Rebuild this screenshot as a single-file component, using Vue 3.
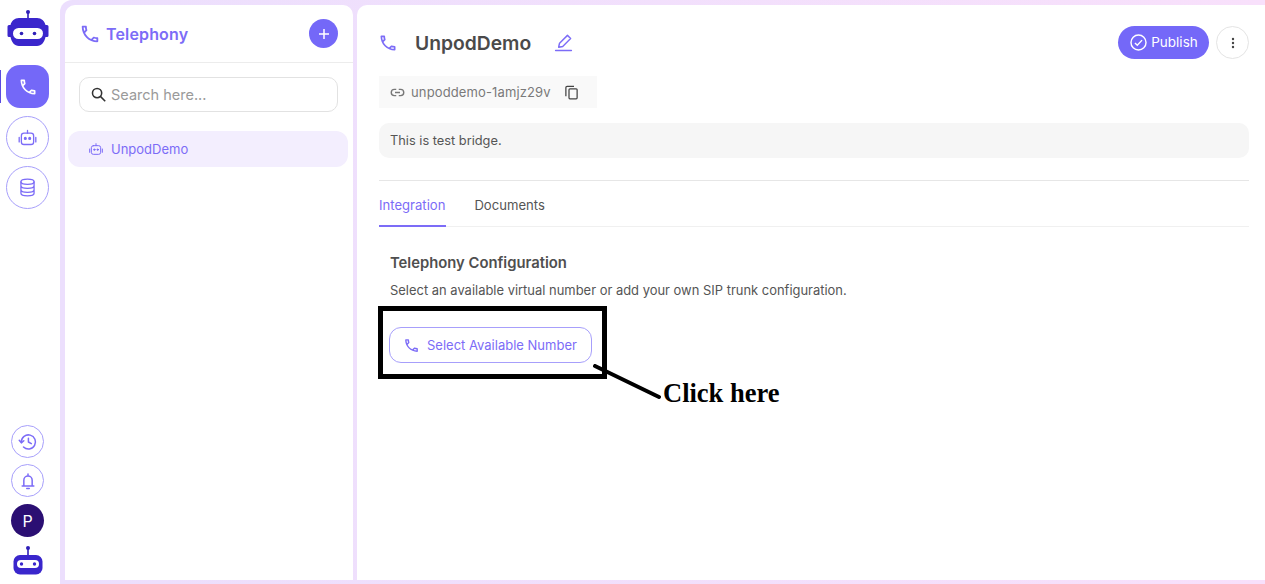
<script setup>
const railTop = [
  { key: 'robot', active: false },
  { key: 'db', active: false },
]
const phone = 'M6.54 5c.06.89.21 1.76.45 2.59l-1.2 1.2c-.41-1.2-.67-2.47-.76-3.79h1.51m9.86 12.02c.85.24 1.72.39 2.6.45v1.49c-1.32-.09-2.59-.35-3.8-.75l1.2-1.19M7.5 3H4c-.55 0-1 .45-1 1 0 9.39 7.61 17 17 17 .55 0 1-.45 1-1v-3.490c0-.55-.45-1-1-1-1.240 0-2.450-.2-3.570-.57-.1-.04-.21-.05-.31-.05-.26 0-.51.1-.71.29l-2.200 2.200c-2.830-1.450-5.150-3.760-6.590-6.590l2.200-2.200c.28-.28.36-.67.25-1.020C8.700 6.450 8.500 5.250 8.500 4c0-.55-.45-1-1-1z'
</script>

<template>
  <div class="page">
    <aside class="rail">
      <svg class="logo" width="42" height="36" viewBox="0 0 42 36">
        <circle cx="21" cy="2" r="2" fill="#2f1fb8" />
        <rect x="20.200" y="3" width="1.600" height="6" fill="#2f1fb8" />
        <path d="M12 8h18c4.500 0 7.500 3 8.500 7H40a1.500 1.500 0 0 1 1.500 1.500v9A1.500 1.500 0 0 1 40 27h-1.500c-1 5-4 9-8.500 9H12c-4.500 0-7.500-4-8.500-9H2A1.500 1.500 0 0 1 .5 25.500v-9A1.500 1.500 0 0 1 2 15h1.500C4.500 11 7.500 8 12 8z" fill="#3a26cc" />
        <rect x="6" y="18" width="30" height="11" rx="5.500" fill="#fff" />
        <circle cx="14.500" cy="23.500" r="1.800" fill="#2f1fb8" />
        <circle cx="27.500" cy="23.500" r="1.800" fill="#2f1fb8" />
      </svg>
      <div class="rail-nav">
        <div class="rail-active">
          <span class="rail-marker"></span>
          <svg width="20" height="20" viewBox="0 0 24 24" fill="#fff"><path :d="phone" /></svg>
        </div>
        <div class="rail-btn" v-for="item in railTop" :key="item.key">
          <svg v-if="item.key === 'robot'" width="21" height="21" viewBox="0 0 24 24" class="ic thin"><rect x="5" y="7" width="14" height="13" rx="3" /><path d="M12 7V4M2.500 12v5M21.500 12v5" /><circle cx="9.500" cy="13" r="1" fill="#7c6cf7" /><circle cx="14.500" cy="13" r="1" fill="#7c6cf7" /></svg>
          <svg v-else width="21" height="21" viewBox="0 0 24 24" class="ic thin"><ellipse cx="12" cy="5.500" rx="7.500" ry="3" /><path d="M4.500 5.500v13c0 1.700 3.400 3 7.500 3s7.500-1.300 7.500-3v-13M4.500 10c0 1.700 3.400 3 7.500 3s7.500-1.300 7.500-3M4.500 14.500c0 1.700 3.400 3 7.500 3s7.500-1.300 7.500-3" /></svg>
        </div>
      </div>
      <div class="rail-bottom">
        <div class="rail-small">
          <svg width="20" height="20" viewBox="0 0 24 24" class="ic"><path d="M4 12a8.500 8.500 0 1 1 2.600 6.100" /><path d="M1.500 10l2.500 3 3-2.500" /><path d="M12.500 7.500V12l3.500 2" /></svg>
        </div>
        <div class="rail-small">
          <svg width="20" height="20" viewBox="0 0 24 24" class="ic"><path d="M5 18h14M7 18v-7a5 5 0 0 1 10 0v7M12 3.500V6M10.500 21h3" /></svg>
        </div>
        <div class="avatar">P</div>
        <svg class="logo-small" width="30" height="30" viewBox="0 0 30 30">
          <circle cx="15" cy="2" r="2" fill="#2f1fb8" />
          <rect x="14.200" y="3" width="1.600" height="6" fill="#2f1fb8" />
          <rect x=".5" y="9" width="29" height="19.500" rx="6.500" fill="#3a26cc" />
          <rect x="4" y="14" width="22" height="8" rx="4" fill="#fff" />
          <circle cx="8.500" cy="18" r="1.700" fill="#3a26cc" />
          <circle cx="21.500" cy="18" r="1.700" fill="#3a26cc" />
        </svg>
      </div>
    </aside>

    <div class="frame">
      <section class="list-panel">
        <header class="list-head">
          <div class="list-title">
            <svg width="22" height="22" viewBox="0 0 24 24" class="ic-fill"><path :d="phone" /></svg>
            <span>Telephony</span>
          </div>
          <button class="add-btn">
            <svg width="14" height="14" viewBox="0 0 14 14"><path d="M7 2v10M2 7h10" stroke="#fff" stroke-width="1.500" fill="none" /></svg>
          </button>
        </header>
        <div class="search">
          <svg width="17" height="17" viewBox="0 0 24 24" fill="none" stroke="#333" stroke-width="2.200"><circle cx="10" cy="10" r="6.500" /><path d="M15 15l6.500 6.500" /></svg>
          <span>Search here...</span>
        </div>
        <div class="list-item">
          <svg width="16" height="16" viewBox="0 0 24 24" class="ic thin"><rect x="5" y="7" width="14" height="13" rx="3" /><path d="M12 7V4M2.500 12v5M21.500 12v5" /><circle cx="9.500" cy="13" r="1" fill="#7c6cf7" /><circle cx="14.500" cy="13" r="1" fill="#7c6cf7" /></svg>
          <span>UnpodDemo</span>
        </div>
      </section>

      <main class="detail">
        <div class="detail-head">
          <div class="detail-title">
            <svg width="20" height="20" viewBox="0 0 24 24" class="ic-fill"><path :d="phone" /></svg>
            <h1>UnpodDemo</h1>
            <svg width="19" height="19" viewBox="0 0 24 24" class="ic"><path d="M2 22h20M6 17l1-4L17 3l4 4-10 10-5 1z" /></svg>
          </div>
          <div class="detail-actions">
            <button class="publish">
              <svg width="19" height="19" viewBox="0 0 24 24" fill="none" stroke="#fff" stroke-width="1.800"><circle cx="12" cy="12" r="9.500" /><path d="M7.500 12.500l3 3 6-6.500" /></svg>
              <span>Publish</span>
            </button>
            <button class="more">
              <svg width="12" height="12" viewBox="0 0 12 12"><circle cx="6" cy="2" r="1.200" fill="#444" /><circle cx="6" cy="6" r="1.200" fill="#444" /><circle cx="6" cy="10" r="1.200" fill="#444" /></svg>
            </button>
          </div>
        </div>

        <div class="slug">
          <svg width="15" height="15" viewBox="0 0 24 24" fill="none" stroke="#777" stroke-width="2.200"><path d="M10 7H7a5 5 0 0 0 0 10h3M14 7h3a5 5 0 0 1 0 10h-3M8 12h8" /></svg>
          <span class="slug-text">unpoddemo-1amjz29v</span>
          <svg width="15" height="15" viewBox="0 0 24 24" fill="none" stroke="#444" stroke-width="2"><rect x="8" y="6" width="13" height="16" rx="1.500" /><path d="M16 2H5a2 2 0 0 0-2 2v14" /></svg>
        </div>

        <div class="desc">This is test bridge.</div>

        <nav class="tabs">
          <span class="tab tab-on">Integration</span>
          <span class="tab">Documents</span>
        </nav>

        <div class="config">
          <h2>Telephony Configuration</h2>
          <p>Select an available virtual number or add your own SIP trunk configuration.</p>
          <div class="highlight">
            <button class="select-btn">
              <svg width="17" height="17" viewBox="0 0 24 24" class="ic-fill"><path :d="phone" /></svg>
              <span>Select Available Number</span>
            </button>
            <svg class="arrow" width="72" height="36" viewBox="0 0 72 36"><path d="M2 2l64 31" stroke="#000" stroke-width="4" stroke-linecap="round" fill="none" /></svg>
            <span class="click-here">Click here</span>
          </div>
        </div>
      </main>
    </div>
  </div>
</template>

<style scoped>
.page {
  display: flex;
  width: 1265px;
  height: 584px;
  overflow: hidden;
  background: #fff;
  font-family: Inter, "Noto Sans", sans-serif;
  color: #4a4a4a;
}
.rail {
  width: 60px;
  flex: none;
  display: flex;
  flex-direction: column;
  align-items: center;
  padding: 10px 0 8px;
  box-sizing: border-box;
}
.logo { margin-right: 5px; flex: none; }
.rail-nav {
  display: flex;
  flex-direction: column;
  align-items: center;
  gap: 7.500px;
  margin-top: 19px;
  margin-right: 5px;
}
.rail-active {
  position: relative;
  width: 43px;
  height: 43px;
  border-radius: 14px;
  background: #7468f8;
  display: flex;
  align-items: center;
  justify-content: center;
}
.rail-marker {
  position: absolute;
  left: -6px;
  top: 5px;
  width: 1px;
  height: 33px;
  background: #5a4be0;
}
.rail-btn {
  width: 43px;
  height: 43px;
  box-sizing: border-box;
  border: 1px solid #a79ffb;
  border-radius: 50%;
  display: flex;
  align-items: center;
  justify-content: center;
}
.rail-bottom {
  margin-top: auto;
  margin-right: 5px;
  display: flex;
  flex-direction: column;
  align-items: center;
  gap: 6px;
}
.rail-small {
  width: 33px;
  height: 33px;
  box-sizing: border-box;
  border: 1px solid #a79ffb;
  border-radius: 50%;
  display: flex;
  align-items: center;
  justify-content: center;
}
.avatar {
  width: 33px;
  height: 33px;
  margin-top: 1px;
  border-radius: 50%;
  background: #2b0f73;
  color: #fff;
  font-size: 16px;
  display: flex;
  align-items: center;
  justify-content: center;
}
.logo-small { margin-top: 3px; }
.ic {
  fill: none;
  stroke: #7c6cf7;
  stroke-width: 1.800;
  stroke-linejoin: round;
  stroke-linecap: round;
  flex: none;
}
.ic.thin { stroke-width: 1.500; }
.ic-fill { fill: #7c6cf7; flex: none; }
.frame {
  flex: 1;
  display: flex;
  gap: 4px;
  padding: 5px 0 4px 5px;
  background: linear-gradient(90deg, #ecdffd, #f8e0fb);
  border-top-left-radius: 12px;
}
.list-panel {
  width: 288px;
  flex: none;
  background: #fff;
  border-radius: 10px 10px 0 0;
  display: flex;
  flex-direction: column;
}
.list-head {
  height: 58px;
  box-sizing: border-box;
  flex: none;
  display: flex;
  align-items: center;
  justify-content: space-between;
  padding: 0 15px 0 14px;
  border-bottom: 1px solid #ececec;
}
.list-title {
  display: flex;
  align-items: center;
  gap: 5px;
  font-size: 16px;
  font-weight: 600;
  letter-spacing: 0.150px;
  color: #7c6cf7;
}
.add-btn {
  width: 29px;
  height: 29px;
  border: 0;
  padding: 0;
  border-radius: 50%;
  background: #7468f8;
  display: flex;
  align-items: center;
  justify-content: center;
}
.search {
  margin: 14px 15px 0 14px;
  height: 35px;
  flex: none;
  box-sizing: border-box;
  border: 1px solid #e2e2e2;
  border-radius: 10px;
  display: flex;
  align-items: center;
  gap: 4px;
  padding: 0 10px;
  font-size: 14.500px;
  color: #9a9a9a;
}
.list-item {
  margin: 19px 5px 0 3px;
  height: 36px;
  flex: none;
  background: #f3eefe;
  border-radius: 12px;
  display: flex;
  align-items: center;
  gap: 7px;
  padding: 0 20px;
  font-size: 13px;
  color: #7c6cf7;
}
.detail {
  flex: 1;
  min-width: 0;
  background: #fff;
  border-radius: 10px 0 0 0;
  padding: 21px 16px 0 22px;
}
.detail-head {
  display: flex;
  align-items: flex-start;
  justify-content: space-between;
  height: 50px;
}
.detail-title {
  display: flex;
  align-items: center;
  gap: 17px;
  height: 33px;
  margin-left: -1px;
}
.detail-title h1 {
  margin: 0 6px 0 0;
  font-size: 19.300px;
  font-weight: 600;
  color: #4a4a4a;
}
.detail-actions {
  display: flex;
  align-items: center;
  gap: 7px;
}
.publish {
  width: 91px;
  height: 33px;
  border: 0;
  padding: 0 0 1px;
  border-radius: 17px;
  background: #7468f8;
  color: #fff;
  font: inherit;
  font-size: 13.500px;
  display: flex;
  align-items: center;
  justify-content: center;
  gap: 3px;
}
.more {
  width: 33px;
  height: 33px;
  padding: 0;
  background: #fff;
  border: 1px solid #e4e4e4;
  border-radius: 50%;
  display: flex;
  align-items: center;
  justify-content: center;
}
.slug {
  width: 218px;
  height: 32px;
  box-sizing: border-box;
  background: #f9f9f9;
  display: flex;
  align-items: center;
  padding: 0 11px;
  gap: 6px;
  font-size: 13px;
  color: #7a7a7a;
}
.slug-text { letter-spacing: 0.130px; margin-right: 7px; }
.desc {
  margin-top: 15px;
  height: 35px;
  box-sizing: border-box;
  border-radius: 10px;
  background: #f6f6f6;
  display: flex;
  align-items: center;
  padding: 0 11px 1px;
  font-size: 12.800px;
  color: #555;
}
.tabs {
  margin-top: 22px;
  border-top: 1px solid #e6e6e6;
  border-bottom: 1px solid #f0f0f0;
  height: 45px;
  display: flex;
  gap: 28px;
}
.tab {
  font-size: 13.100px;
  display: flex;
  align-items: center;
  height: 46px;
  box-sizing: border-box;
  padding-top: 2px;
  color: #555;
}
.tab-on {
  color: #7c6cf7;
  border-bottom: 2px solid #7c6cf7;
  padding-top: 4px;
  padding-right: 1px;
}
.config { padding: 27px 0 0 11px; }
.config h2 {
  margin: 0;
  font-size: 14.800px;
  line-height: 18px;
  font-weight: 600;
  color: #4f4f4f;
}
.config p {
  margin: 10px 0 0;
  font-size: 12.950px;
  line-height: 17px;
  color: #555;
}
.highlight {
  position: relative;
  margin: 7px 0 0 -12px;
  width: 229px;
  height: 73px;
  box-sizing: border-box;
  border: 5px solid #000;
  padding: 16px 0 0 6px;
}
.select-btn {
  width: 203px;
  height: 36px;
  padding: 0 0 0 13px;
  box-sizing: border-box;
  background: #fff;
  border: 1px solid #a79ffb;
  border-radius: 12px;
  color: #7c6cf7;
  font: inherit;
  font-size: 13px;
  display: flex;
  align-items: center;
  gap: 7px;
}
.arrow {
  position: absolute;
  left: 210px;
  top: 53px;
}
.click-here {
  position: absolute;
  left: 280px;
  top: 68px;
  white-space: nowrap;
  font-family: "Liberation Serif", serif;
  font-weight: 700;
  font-size: 26.500px;
  line-height: 28px;
  color: #000;
}
</style>
